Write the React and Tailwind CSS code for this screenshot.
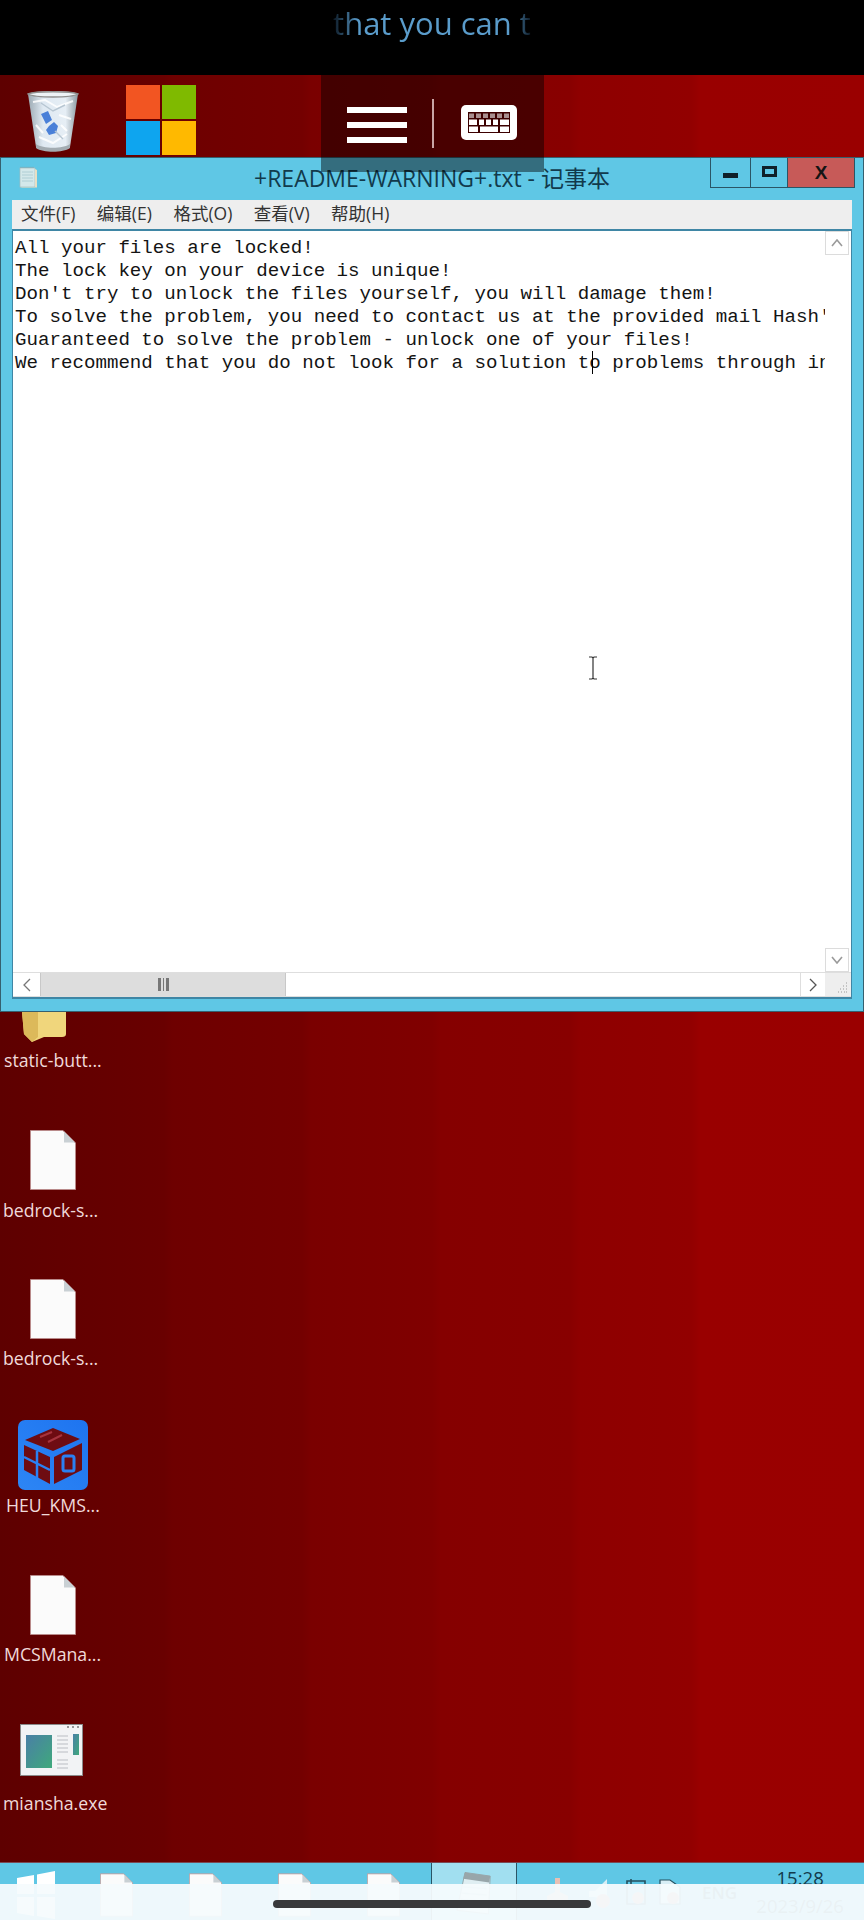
import React from "react";

const lines = [
  "All your files are locked!",
  "The lock key on your device is unique!",
  "Don't try to unlock the files yourself, you will damage them!",
  "To solve the problem, you need to contact us at the provided mail Hash'",
  "Guaranteed to solve the problem - unlock one of your files!",
  "We recommend that you do not look for a solution to problems through internet",
];

function Page({ className = "" }) {
  return (
    <svg viewBox="0 0 46 60" className={className}>
      <path d="M0.5 0.5H33L45.5 13V59.5H0.5Z" fill="#fbfbfb" stroke="#b98a8a" strokeWidth="1" />
      <path d="M34 1.5V12.5H45Z" fill="#c9d0d4" />
    </svg>
  );
}

function Notepad({ className = "" }) {
  return (
    <svg viewBox="0 0 20 22" className={className}>
      <rect x="2" y="2" width="15" height="19" fill="#d4e8ea" stroke="#a7bcbe" strokeWidth="0.7" />
      <path d="M4 6H15M4 9H15M4 12H15M4 15H15" stroke="#a6c8cf" strokeWidth="0.8" />
      <path d="M3 2V0.8M5 2V0.8M7 2V0.8M9 2V0.8M11 2V0.8M13 2V0.8M15 2V0.8" stroke="#8a9a9c" strokeWidth="0.7" />
      <path d="M17 3L19 4V21.5H4L2 21H17Z" fill="#e8dfc4" />
    </svg>
  );
}

function TiltedPad({ className = "" }) {
  return (
    <svg viewBox="0 0 40 54" className={className}>
      <path d="M10 2L38 6L36 48L1 44Z" fill="#dfeef2" stroke="#8fa2a6" strokeWidth="1" />
      <path d="M10 2L38 6L37 13L8 9Z" fill="#98a6aa" />
      <path d="M8 18L34 20M6 25L34 27M5 32L33 34" stroke="#b4d2d9" strokeWidth="1.4" />
    </svg>
  );
}

function Bin({ className = "" }) {
  return (
    <svg viewBox="0 0 52 64" className={className}>
      <defs>
        <linearGradient id="binG" x1="0" x2="1">
          <stop offset="0" stopColor="#9ba9b2" />
          <stop offset="0.3" stopColor="#dfe9f2" />
          <stop offset="0.75" stopColor="#e6eef5" />
          <stop offset="1" stopColor="#8c99a1" />
        </linearGradient>
      </defs>
      <path d="M1 5C8 1 44 1 51 5L43 58C36 63 16 63 9 58Z" fill="url(#binG)" />
      <path d="M1 5C8 9 44 9 51 5C44 2 8 2 1 5Z" fill="#eef3f7" stroke="#8f8f8f" strokeWidth="1.4" />
      <path d="M9 55C16 60 36 60 43 55L43 59C36 64 16 64 9 59Z" fill="#a3acb2" />
      <path d="M14 25L21 22L25 31L19 35ZM22 37L27 33L31 37L29 44L22 46L19 41Z" fill="#4a80d8" />
      <path d="M6 13L18 11L30 18L46 12M12 48L26 54L40 45M32 26L44 30M9 36L16 44M34 36L40 42" stroke="#fff" strokeWidth="2" fill="none" opacity="0.85" />
      <path d="M14 14L26 22L38 16M28 42L36 50" stroke="#b7c6d2" strokeWidth="1.4" fill="none" />
    </svg>
  );
}

function Heu({ className = "" }) {
  return (
    <svg viewBox="0 0 70 70" className={className}>
      <defs>
        <linearGradient id="heuG" x1="0" y1="1" x2="1" y2="0">
          <stop offset="0" stopColor="#2d86f5" />
          <stop offset="1" stopColor="#1e74f0" />
        </linearGradient>
      </defs>
      <rect width="70" height="70" rx="7" fill="url(#heuG)" />
      <path d="M35 8L62 19L35 31L7 20Z" fill="#6e0c12" />
      <path d="M6 25L32 37V64L6 50Z" fill="#6e0c12" />
      <path d="M36 37L64 23V50L36 64Z" fill="#6e0c12" />
      <path d="M6 37L32 50M19 31V58" stroke="#2a80f3" strokeWidth="2.5" />
      <path d="M22 17L34 12M30 22L44 15" stroke="#a6333d" strokeWidth="2" />
      <rect x="45" y="36" width="11" height="15" rx="2" fill="none" stroke="#2a80f3" strokeWidth="3" />
    </svg>
  );
}

function Mian({ className = "" }) {
  return (
    <svg viewBox="0 0 63 52" className={className}>
      <defs>
        <linearGradient id="miG" x1="0" y1="0" x2="1" y2="1">
          <stop offset="0" stopColor="#4a7fa6" />
          <stop offset="1" stopColor="#3fa97c" />
        </linearGradient>
      </defs>
      <rect x="0.5" y="0.5" width="62" height="51" fill="#f2f3f5" stroke="#8b8b8b" />
      <rect x="6" y="11" width="26" height="33" fill="url(#miG)" />
      <rect x="53" y="10" width="6" height="21" fill="url(#miG)" />
      <path d="M37 12H48M37 16H48M37 20H48M37 24H48M37 28H48M37 36H48M37 40H48M37 44H48" stroke="#b9bec4" strokeWidth="1.2" />
      <path d="M47 3H49M52 3H54M57 3H59" stroke="#777" strokeWidth="1.4" />
    </svg>
  );
}

function Keyboard() {
  return (
    <svg viewBox="0 0 56 35" className="h-[35px] w-[56px]">
      <rect width="56" height="35" rx="5" fill="#fff" />
      <rect x="7" y="7" width="42" height="21" fill="#3c0000" />
      <path d="M8 8.5H13V13H8ZM15 8.5H20V13H15ZM22 8.5H27V13H22ZM29 8.5H34V13H29ZM36 8.5H41V13H36ZM43 8.5H48V13H43Z" fill="#a88f8f" />
      <path d="M8 14.5H16V20H8ZM18 14.5H23V20H18ZM25 14.5H30V20H25ZM32 14.5H37V20H32ZM39 14.5H48V20H39Z" fill="#fff" />
      <path d="M8 21.5H17V27H8ZM19 21.5H37V27H19ZM39 21.5H48V27H39Z" fill="#fff" />
    </svg>
  );
}

function DeskIcon({ top, left, label, labelTop, labelLeft, children }) {
  return (
    <>
      <div className="absolute" style={{ top, left }}>{children}</div>
      <div
        className="absolute whitespace-nowrap text-[17.7px] leading-5 text-[#f0dada] [font-family:'Open_Sans',sans-serif]"
        style={{ top: labelTop, left: labelLeft }}
      >
        {label}
      </div>
    </>
  );
}

const menuItems = ["文件(F)", "编辑(E)", "格式(O)", "查看(V)", "帮助(H)"];

function Scroller({ up }) {
  return (
    <div className="flex h-6 w-6 items-center justify-center border border-[#dcdcdc] bg-white">
      <svg viewBox="0 0 12 8" className="h-2 w-3">
        <path d={up ? "M1 7L6 1L11 7" : "M1 1L6 7L11 1"} fill="none" stroke="#9a9a9a" strokeWidth="1.6" />
      </svg>
    </div>
  );
}

function Notebook() {
  return (
    <div className="absolute left-0 top-[82px] flex h-[855px] w-[864px] flex-col border border-[#35606f] bg-[#5fc7e5] px-[11px] pb-[12px]">
      <div className="relative flex h-[42px] shrink-0 items-center justify-center">
        <Notepad className="absolute left-[6px] top-[8px] h-[22px] w-[20px]" />
        <span className="-mt-[2px] text-[23px] text-[#123a4c] [font-family:'Open_Sans','Noto_Sans_CJK_SC',sans-serif]">
          +README-WARNING+.txt - 记事本
        </span>
        <div className="absolute right-[-3px] top-0 flex h-[30px] items-stretch border-b border-l border-[#2a5566]">
          <div className="flex w-[40px] items-center justify-center border-r border-[#2a5566]">
            <div className="mt-[6px] h-[5px] w-[15px] bg-[#0f2029]" />
          </div>
          <div className="flex w-[37px] items-center justify-center border-r border-[#2a5566]">
            <div className="mb-[2px] h-[11px] w-[15px] border-[3px] border-[#0f2029]" />
          </div>
          <div className="flex w-[67px] items-center justify-center border-r border-[#2a5566] bg-[#c75a58] text-[19px] font-bold leading-none text-[#141414] [font-family:'Liberation_Sans',sans-serif]">
            X
          </div>
        </div>
      </div>
      <div className="flex h-[29px] shrink-0 items-center gap-[21.5px] bg-[#eeeeee] pl-[9px] text-[17.5px] leading-none text-[#333] [font-family:'Open_Sans','Noto_Sans_CJK_SC',sans-serif]">
        {menuItems.map((m) => (
          <span key={m} className="-mt-[1px]">{m}</span>
        ))}
      </div>
      <div className="flex min-h-0 flex-1 flex-col border-x border-b-2 border-t-2 border-[#3f86a5] bg-white">
        <div className="flex min-h-0 flex-1">
          <div className="relative min-w-0 flex-1 overflow-hidden pl-[2px] pt-[6px]">
            <div className="whitespace-pre text-[19.15px] leading-[23px] text-[#141414] [font-family:'Liberation_Mono',monospace]">
              {lines.map((l) => (
                <div key={l}>{l}</div>
              ))}
            </div>
            <div className="absolute left-[579px] top-[120px] h-[23px] w-px bg-black" />
            <svg viewBox="0 0 12 24" className="absolute left-[574px] top-[425px] h-[24px] w-[12px]">
              <path d="M2 1H5L6 2L7 1H10M6 2V22M2 23H5L6 22L7 23H10" fill="none" stroke="#333" strokeWidth="1.2" />
            </svg>
          </div>
          <div className="flex w-[26px] shrink-0 flex-col justify-between bg-white">
            <Scroller up />
            <Scroller />
          </div>
        </div>
        <div className="flex h-[25px] shrink-0 items-stretch border-y border-[#dedede]">
          <div className="flex w-[27px] items-center justify-center">
            <svg viewBox="0 0 8 14" className="h-[14px] w-2">
              <path d="M7 1L1 7L7 13" fill="none" stroke="#777" strokeWidth="1.3" />
            </svg>
          </div>
          <div className="flex w-[246px] items-center justify-center border-x border-[#c8c8c8] bg-[#dddddd]">
            <div className="h-[13px] w-[11px] border-x-[3px] border-[#777] bg-[linear-gradient(90deg,#ddd_35%,#777_35%,#777_65%,#ddd_65%)]" />
          </div>
          <div className="flex-1" />
          <div className="flex w-[25px] items-center justify-center border-l border-[#dedede]">
            <svg viewBox="0 0 8 14" className="h-[14px] w-2">
              <path d="M1 1L7 7L1 13" fill="none" stroke="#555" strokeWidth="1.3" />
            </svg>
          </div>
          <div className="flex w-[26px] items-end justify-end bg-[#eeeeee] p-[3px]">
            <svg viewBox="0 0 12 12" className="h-3 w-3">
              <path d="M10 2H11M7 5H8M10 5H11M4 8H5M7 8H8M10 8H11M2 11H3M5 11H6M8 11H9M10 11H11" stroke="#9a9a9a" strokeWidth="1" />
            </svg>
          </div>
        </div>
      </div>
    </div>
  );
}

function Taskbar() {
  return (
    <div className="mt-auto flex h-[58px] shrink-0 items-start border-t border-[#7a4a55] bg-[#5fc7e5]">
      <svg viewBox="0 0 38 48" className="ml-[17px] mt-[8px] h-[48px] w-[38px]">
        <path d="M0 7L17 4V23H0ZM20 3.5L38 0V23H20ZM0 26H17V45L0 42ZM20 26H38V48L20 45Z" fill="#fff" />
      </svg>
      <div className="ml-[45px] mt-[10px] flex gap-[56px]">
        <Page className="h-[44px] w-[33px]" />
        <Page className="h-[44px] w-[33px]" />
        <Page className="h-[44px] w-[33px]" />
        <Page className="h-[44px] w-[33px]" />
      </div>
      <div className="ml-[31px] flex h-full w-[86px] items-start justify-center border-x border-[#2a5566] bg-[#a1dff0] pt-[7px]">
        <TiltedPad className="h-[50px] w-[36px]" />
      </div>
      <div className="ml-[30px] flex items-start">
        <svg viewBox="0 0 21 30" className="mt-[15px] h-[30px] w-[21px]">
          <path d="M8 0H13V14L21 18V30H0V18L8 14Z" fill="#e8c0b4" />
        </svg>
        <svg viewBox="0 0 24 30" className="ml-[20px] mt-[16px] h-[30px] w-[24px]">
          <path d="M1 12H7L19 0V22L7 18H1Z" fill="#d8eef5" />
          <circle cx="15" cy="22" r="7" fill="#e8a090" />
        </svg>
        <svg viewBox="0 0 22 30" className="ml-[13px] mt-[15px] h-[30px] w-[22px]">
          <path d="M2 3H20V26H2ZM6 1V6" fill="none" stroke="#25505f" strokeWidth="1.6" />
          <circle cx="13" cy="20" r="6" fill="#e8a090" />
        </svg>
        <svg viewBox="0 0 24 30" className="ml-[11px] mt-[15px] h-[30px] w-[24px]">
          <path d="M2 2H12L22 9V26H2Z" fill="#d8eef5" stroke="#25505f" strokeWidth="1.2" />
          <circle cx="15" cy="20" r="6" fill="#e8a090" />
        </svg>
        <span className="ml-[20px] mt-[18px] text-[17px] font-semibold leading-6 text-[#123a4c] [font-family:'Open_Sans',sans-serif]">
          ENG
        </span>
        <div className="ml-[21px] flex w-[84px] flex-col items-center pt-[1px] text-[#123a4c] [font-family:'Open_Sans',sans-serif]">
          <span className="text-[18.5px] leading-7">15:28</span>
          <span className="text-[18.5px] leading-7">2023/9/26</span>
        </div>
      </div>
    </div>
  );
}

export default function App() {
  return (
    <div className="relative flex h-[1920px] w-[864px] flex-col overflow-hidden bg-black">
      <div className="flex h-[75px] shrink-0 items-center justify-center pb-[29px]">
        <span className="bg-[linear-gradient(90deg,#0a1520_0%,#5a9ccb_13%,#5a9ccb_90%,#0a1520_100%)] bg-clip-text text-[31px] leading-[40px] text-transparent [font-family:'Open_Sans',sans-serif]">
          that you can t
        </span>
      </div>
      <div className="relative flex min-h-0 flex-1 flex-col bg-[linear-gradient(90deg,#5e0000_0%,#690000_19%,#6e0000_20%,#740000_35%,#7a0000_36%,#800000_50%,#850000_51%,#880000_66%,#8e0000_67%,#920000_80%,#990000_81%,#9a0000_100%)]">
        <div className="absolute left-[27px] top-[14px]">
          <Bin className="h-[64px] w-[52px]" />
        </div>
        <div className="absolute left-[126px] top-[10px] grid grid-cols-[34px_34px] grid-rows-[34px_34px] gap-[2px]">
          <div className="bg-[#f25522]" />
          <div className="bg-[#7fba00]" />
          <div className="bg-[#0ea5ef]" />
          <div className="bg-[#ffb900]" />
        </div>

        <DeskIcon top={937} left={22} label="static-butt..." labelTop={975} labelLeft={4}>
          <svg viewBox="0 0 44 30" className="h-[30px] w-[44px]">
            <path d="M0 0H44V22Q44 25 40 25H22L10 30L2 22Z" fill="#f0d67c" />
            <path d="M0 0H16V25L10 30L2 22Z" fill="#dcb95a" />
          </svg>
        </DeskIcon>
        <DeskIcon top={1055} left={30} label="bedrock-s..." labelTop={1125} labelLeft={3}>
          <Page className="h-[60px] w-[46px]" />
        </DeskIcon>
        <DeskIcon top={1204} left={30} label="bedrock-s..." labelTop={1273} labelLeft={3}>
          <Page className="h-[60px] w-[46px]" />
        </DeskIcon>
        <DeskIcon top={1345} left={18} label="HEU_KMS..." labelTop={1420} labelLeft={6}>
          <Heu className="h-[70px] w-[70px]" />
        </DeskIcon>
        <DeskIcon top={1500} left={30} label="MCSMana..." labelTop={1569} labelLeft={4}>
          <Page className="h-[60px] w-[46px]" />
        </DeskIcon>
        <DeskIcon top={1649} left={20} label="miansha.exe" labelTop={1718} labelLeft={3}>
          <Mian className="h-[52px] w-[63px]" />
        </DeskIcon>

        <Notebook />

        <div className="absolute left-[321px] top-0 flex h-[97px] w-[223px] items-start bg-black/45 pl-[26px] pt-[24px]">
          <div className="mt-[8px] flex w-[60px] flex-col gap-[9px]">
            <div className="h-[6px] bg-white" />
            <div className="h-[6px] bg-white" />
            <div className="h-[6px] bg-white" />
          </div>
          <div className="ml-[25px] h-[49px] w-[2px] bg-[#c9a5a5]" />
          <div className="ml-[27px] mt-[6px]">
            <Keyboard />
          </div>
        </div>

        <Taskbar />
      </div>

      <div className="absolute bottom-0 left-0 flex h-[36px] w-[864px] items-start justify-center bg-[#f6fbfd]/95 pt-[16px]">
        <div className="h-[8px] w-[318px] rounded-full bg-[#38393b]" />
      </div>
    </div>
  );
}
